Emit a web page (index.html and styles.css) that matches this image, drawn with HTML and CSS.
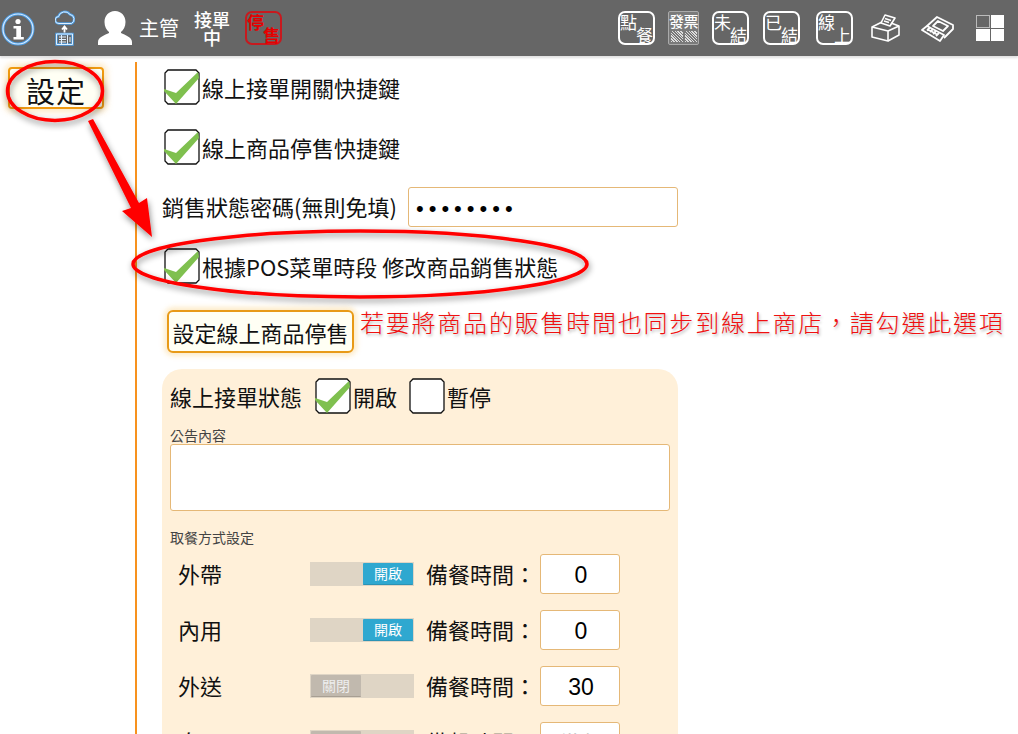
FILE: index.html
```html
<!DOCTYPE html>
<html lang="zh-Hant">
<head>
<meta charset="utf-8">
<title>設定</title>
<link rel="stylesheet" href="styles.css">
</head>
<body>
<header class="topbar">
  <div class="tools-left">
    <svg class="ico-info" viewBox="0 0 34 34" width="34" height="34"><circle cx="17" cy="17" r="15" fill="none" stroke="#4f9fe6" stroke-width="3"/><circle cx="17" cy="17" r="15" fill="none" stroke="#d6eaff" stroke-width="1.200"/><circle cx="17" cy="9.500" r="2.600" fill="#fff"/><path d="M12.500 14h7.500v11h2.800v2.500H12.500V25h2.800v-8.500h-2.800z" fill="#fff"/></svg>
    <svg class="ico-cloud" viewBox="0 0 20 36" width="20" height="36"><g fill="none" stroke="#4f9fe6" stroke-width="2.400"><path d="M4 13.500a3.500 3.500 0 0 1-.5-7 6.500 6.500 0 0 1 11.500-2 4.800 4.800 0 0 1 1.500 9z"/><path d="M1.500 24h16v10.500h-16z"/></g><g fill="none" stroke="#dff0ff" stroke-width="1"><path d="M4 13.500a3.500 3.500 0 0 1-.5-7 6.500 6.500 0 0 1 11.500-2 4.800 4.800 0 0 1 1.500 9z"/><path d="M1.500 24h16v10.500h-16z"/><path d="M4 27h7M4 29.500h7M4 32h7M6.500 25v9M12.500 25v9M15 27v5"/></g><path d="M9.500 22.500v-5M7 19.500l2.500-3 2.500 3" fill="none" stroke="#fff" stroke-width="1.800"/></svg>
    <svg class="ico-user" viewBox="0 0 34 34" width="34" height="34"><path d="M17 0c6.500 0 10.500 5 10.500 11 0 4.500-2 8-4.500 10v1c4 2 11 4 11 9v3H0v-3c0-5 7-7 11-9v-1c-2.500-2-4.500-5.500-4.500-10C6.500 5 10.500 0 17 0z" fill="#fff"/></svg>
    <span class="role">主管</span>
    <span class="status">接單<br>中</span>
    <span class="stamp stamp-red"><span class="tl">停</span><span class="br">售</span></span>
  </div>
  <div class="tools-right">
    <span class="stamp stamp-tight"><span class="tl">點</span><span class="br">餐</span></span>
    <span class="stamp stamp-inv"><span class="inv-top">發票</span><span class="inv-qr"><i></i><i></i></span></span>
    <span class="stamp"><span class="tl">未</span><span class="br">結</span></span>
    <span class="stamp stamp-wide"><span class="tl">已</span><span class="br">結</span></span>
    <span class="stamp"><span class="tl">線</span><span class="br">上</span></span>
    <svg class="ico-printer" viewBox="0 0 30 28" width="30" height="28"><g fill="none" stroke="#fff" stroke-width="1.600" stroke-linejoin="round"><path d="M2 13l16 4v10L2 23z"/><path d="M18 17l11-5v9l-11 6"/><path d="M2 13l10-5M21 9l8 3"/><path d="M15 1l10 3-5 8-9-3z"/><path d="M15 4.500l6 2M14 7l5 1.500"/></g></svg>
    <svg class="ico-drawer" viewBox="0 0 33 27" width="33" height="27"><g fill="none" stroke="#fff" stroke-width="1.800" stroke-linejoin="round"><path d="M6 11l10-9 16 8v4L23 23"/><path d="M12 11l5-5 10 5-5 5z"/><path d="M1 15l5-4 17 9-4 6z"/><path d="M6 14l11 6M9 12.500l-3 3M12 14l-3 3M15 16l-3 3M18 18l-3 3"/></g></svg>
    <span class="layout-grid"><i class="cell-empty"></i><i></i><i></i><i></i></span>
  </div>
</header>

<main class="page">
  <aside class="side">
    <button class="side-btn" type="button">設定</button>
  </aside>
  <section class="content">
    <label class="line line-a"><svg class="check" viewBox="0 0 36 36" width="36" height="36"><path class="box" d="M4 1h28l3 3v28l-3 3H4l-3-3V4z"/><path class="tick" d="M0 20l12 4L34 3l1 6-23 26L0 22z"/></svg><span>線上接單開關快捷鍵</span></label>
    <label class="line line-b"><svg class="check" viewBox="0 0 36 36" width="36" height="36"><path class="box" d="M4 1h28l3 3v28l-3 3H4l-3-3V4z"/><path class="tick" d="M0 20l12 4L34 3l1 6-23 26L0 22z"/></svg><span>線上商品停售快捷鍵</span></label>
    <div class="line line-pw"><span class="pw-label">銷售狀態密碼(無則免填)</span><input class="pw-input" type="password" value="12345678"></div>
    <label class="line line-c"><svg class="check" viewBox="0 0 36 36" width="36" height="36"><path class="box" d="M4 1h28l3 3v28l-3 3H4l-3-3V4z"/><path class="tick" d="M0 20l12 4L34 3l1 6-23 26L0 22z"/></svg><span>根據POS菜單時段 修改商品銷售狀態</span></label>
    <button class="stop-btn" type="button">設定線上商品停售</button>

    <div class="panel">
      <div class="state">
        <span class="state-title">線上接單狀態</span>
        <label class="state-opt"><svg class="check" viewBox="0 0 36 36" width="36" height="36"><path class="box" d="M4 1h28l3 3v28l-3 3H4l-3-3V4z"/><path class="tick" d="M0 20l12 4L34 3l1 6-23 26L0 22z"/></svg><span>開啟</span></label>
        <label class="state-opt"><svg class="check" viewBox="0 0 36 36" width="36" height="36"><path class="box" d="M4 1h28l3 3v28l-3 3H4l-3-3V4z"/></svg><span>暫停</span></label>
      </div>
      <div class="small-label">公告內容</div>
      <textarea class="notice"></textarea>
      <div class="small-label small-label-2">取餐方式設定</div>
      <div class="pick">
        <span class="pick-name">外帶</span>
        <span class="toggle on"><span class="knob">開啟</span></span>
        <span class="prep">備餐時間：</span>
        <input class="prep-input" type="text" value="0">
      </div>
      <div class="pick">
        <span class="pick-name">內用</span>
        <span class="toggle on"><span class="knob">開啟</span></span>
        <span class="prep">備餐時間：</span>
        <input class="prep-input" type="text" value="0">
      </div>
      <div class="pick">
        <span class="pick-name">外送</span>
        <span class="toggle"><span class="knob">關閉</span></span>
        <span class="prep">備餐時間：</span>
        <input class="prep-input" type="text" value="30">
      </div>
      <div class="pick">
        <span class="pick-name">自取</span>
        <span class="toggle"><span class="knob">關閉</span></span>
        <span class="prep">備餐時間：</span>
        <input class="prep-input prep-muted" type="text" value="備餐">
      </div>
    </div>
  </section>
</main>

<svg class="marks" viewBox="0 0 1018 734" width="1018" height="734">
  <defs><filter id="sh" x="-20%" y="-20%" width="140%" height="140%"><feDropShadow dx="1" dy="3" stdDeviation="3" flood-color="#000" flood-opacity=".45"/></filter></defs>
  <g filter="url(#sh)">
    <ellipse cx="55" cy="91" rx="47.500" ry="29.500" fill="none" stroke="#f00" stroke-width="3.500"/>
    <ellipse cx="360" cy="264" rx="227" ry="33" fill="none" stroke="#f00" stroke-width="3.500"/>
    <path d="M88 121l5-2 46 84 8-5 5 39-30-26 9-3z" fill="#f00"/>
  </g>
</svg>
<p class="note">若要將商品的販售時間也同步到線上商店，請勾選此選項</p>
</body>
</html>
```
FILE: styles.css
```css
* { box-sizing: border-box; }
html, body { margin: 0; height: 734px; overflow: hidden; background: #fff; }
body {
  position: relative;
  font-family: "Noto Sans CJK TC", "Liberation Sans", sans-serif;
  color: #111;
  display: flex;
  flex-direction: column;
}
.topbar {
  height: 56px;
  flex: none;
  background: #666;
  box-shadow: 0 2px 2px rgba(0,0,0,.12);
  display: flex;
  justify-content: space-between;
  align-items: center;
  color: #fff;
  padding: 0 14px 0 1px;
}
.tools-left, .tools-right { display: flex; align-items: center; }
.ico-info { margin-top: 2px; }
.ico-cloud { margin-left: 20px; }
.ico-user { margin-left: 23px; }
.role { font-size: 20px; line-height: 24px; margin-left: 7px; white-space: nowrap; }
.status { font-size: 18px; line-height: 18px; text-align: center; margin: -1px 0 0 15px; width: 36px; font-weight: 500; }
.stamp {
  position: relative;
  display: block;
  flex: none;
  width: 37px;
  height: 34px;
  border: 2px solid #fff;
  border-radius: 7px;
  color: #fff;
  font-size: 17px;
  line-height: 17px;
  margin-right: 14px;
}
.stamp .tl { position: absolute; left: 0; top: 0; }
.stamp .br { position: absolute; right: 0; bottom: 0; }
.stamp-red { border-color: #c8191e; color: #e60000; font-weight: 700; margin: 0 0 0 15px; }
.stamp-tight { margin-right: 13px; }
.stamp-wide { margin-right: 16px; }
.stamp-inv {
  border-radius: 2px;
  border-width: 1px;
  border-color: #aaa;
  background: #7a7a7a;
  width: 31px;
  margin-right: 13px;
  display: flex;
  flex-direction: column;
  align-items: center;
}
.inv-top { font-size: 15px; line-height: 17px; letter-spacing: -.5px; white-space: nowrap; font-weight: 500; }
.inv-qr { display: flex; gap: 2px; margin-top: 2px; }
.inv-qr i {
  display: block;
  width: 12px;
  height: 11px;
  background: repeating-linear-gradient(45deg, #ddd 0 1px, #777 1px 2px);
}
.ico-printer { margin: 0 21px 0 3px; }
.ico-drawer { margin-right: 22px; }
.layout-grid {
  display: grid;
  grid-template-columns: 13.5px 13.5px;
  grid-template-rows: 12.500px 12.500px;
  gap: 1px;
}
.layout-grid i { background: #fff; display: block; }
.layout-grid .cell-empty { background: none; box-shadow: inset 0 0 0 1px #bbb; }

.page { flex: 1; display: flex; padding-top: 6px; min-height: 0; }
.side { width: 135px; flex: none; padding: 5px 0 0 8px; }
.side-btn {
  width: 96px;
  height: 42px;
  padding: 3px 0 0;
  background: #fffff4;
  border: 2px solid #f09a10;
  border-radius: 4px;
  box-shadow: 0 0 6px 3px rgba(250,205,120,.45);
  font: 400 29px/34px "Noto Sans CJK TC", sans-serif;
  letter-spacing: 1px;
  color: #111;
}
.content {
  flex: 1;
  border-left: 2px solid #f7921e;
  padding: 9px 0 0 25px;
  min-width: 0;
}
.line { display: flex; align-items: flex-start; font-size: 22px; line-height: 32px; height: 34px; white-space: nowrap; }
.line-a, .line-b, .line-c { padding-left: 3px; }
.line-a { margin-bottom: 26px; }
.line-b { margin-bottom: 22px; }
.line-pw { height: 40px; margin-bottom: 23px; line-height: 40px; }
.line-c { margin-bottom: 26px; }
.check { flex: none; margin: -2px 2px 0 -1px; overflow: visible; }
.check .box { fill: #fff; stroke: #111; stroke-width: 1.300; }
.check .tick { fill: #7fc04f; }
.pw-label { width: 246px; margin-top: -1px; }
.pw-input {
  width: 270px;
  height: 40px;
  border: 1px solid #e5b877;
  border-radius: 3px;
  padding: 3px 7px 0;
  font: 22px "Liberation Sans", sans-serif;
  letter-spacing: 5px;
  background: #fff;
}
.stop-btn {
  display: block;
  margin-left: 5px;
  width: 187px;
  height: 43px;
  padding: 0;
  background: #fffff4;
  border: 2px solid #e89a18;
  border-radius: 6px;
  box-shadow: 0 0 5px 3px rgba(250,205,120,.4);
  font: 22px/38px "Noto Sans CJK TC", sans-serif;
  color: #111;
  white-space: nowrap;
}
.panel {
  width: 516px;
  margin-top: 16px;
  height: 420px;
  background: #fff0d9;
  border-radius: 20px;
  padding: 11px 8px 0 8px;
}
.state { display: flex; align-items: flex-start; height: 34px; font-size: 22px; line-height: 32px; white-space: nowrap; }
.state-title { width: 146px; }
.state-opt { display: flex; align-items: flex-start; width: 94px; }
.small-label { font-size: 14px; line-height: 16px; color: #444; margin-top: 13px; }
.small-label-2 { margin-top: 18px; }
.notice {
  display: block;
  width: 500px;
  height: 67px;
  margin-top: 1px;
  border: 1px solid #e5b877;
  border-radius: 3px;
  background: #fff;
  resize: none;
}
.pick { display: flex; align-items: center; height: 40px; margin-top: 16px; font-size: 22px; line-height: 38px; white-space: nowrap; }
.small-label-2 + .pick { margin-top: 9px; }
.pick-name { width: 140px; padding-left: 8px; margin-top: -2px; }
.toggle {
  width: 104px;
  height: 24px;
  background: #dfd5c5;
  display: flex;
  padding: 1px;
  flex: none;
}
.toggle.on { justify-content: flex-end; }
.knob {
  width: 50px;
  height: 22px;
  background: #c1b9ae;
  color: #eee;
  font-size: 14px;
  line-height: 21px;
  text-align: center;
  border-bottom: 1px solid #a89f93;
  border-radius: 1px;
}
.toggle.on .knob { background: #2fa8d0; color: #fff; border-bottom-color: #2b93b5; }
.prep { margin-left: 12px; width: 114px; margin-top: -2px; }
.prep-input {
  width: 80px;
  height: 40px;
  border: 1px solid #e5b877;
  border-radius: 3px;
  background: #fff;
  text-align: center;
  font: 23px "Liberation Sans", "Noto Sans CJK TC", sans-serif;
  color: #000;
  padding: 2px 0 0 2px;
}
.prep-muted { color: #999; }
.marks { position: absolute; left: 0; top: 0; pointer-events: none; }
.note {
  position: absolute;
  left: 360px;
  top: 304px;
  margin: 0;
  color: #f01010;
  font-size: 24px;
  font-weight: 300;
  line-height: 36px;
  letter-spacing: 1.780px;
  white-space: nowrap;
  text-shadow: 1px 2px 3px rgba(0,0,0,.3);
}
```
